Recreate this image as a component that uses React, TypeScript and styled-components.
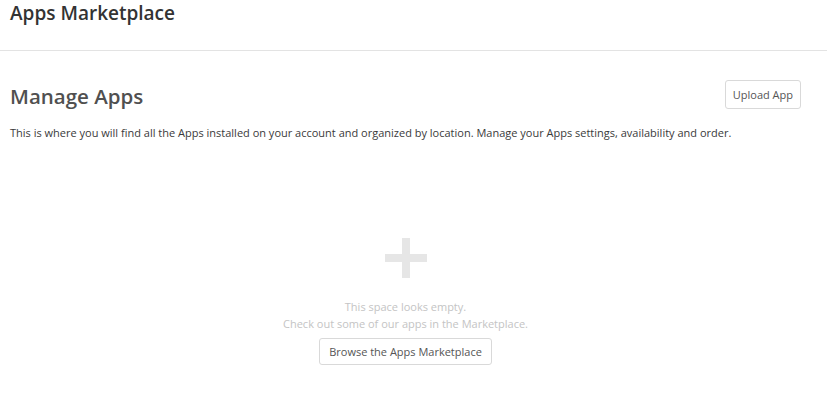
import React from "react";
import styled, { createGlobalStyle } from "styled-components";

const Global = createGlobalStyle`
  html, body { margin: 0; padding: 0; background: #fff; }
  body { font-family: "Open Sans", Lato, Arial, sans-serif; color: #333; }
  * { box-sizing: border-box; }
`;

const Header = styled.header`
  height: 51px;
  padding: 0 10px;
  border-bottom: 1px solid #e3e3e3;
`;

const Title = styled.h1`
  margin: 0;
  padding-top: 1px;
  font-size: 19px;
  line-height: 24px;
  font-weight: 600;
  color: #333;
`;

const Main = styled.main`
  padding: 29px 26px 0 10px;
`;

const TopRow = styled.div`
  display: flex;
  justify-content: space-between;
  align-items: flex-start;
`;

const PageTitle = styled.h2`
  margin: 0;
  padding-top: 1px;
  font-size: 20.5px;
  line-height: 30px;
  font-weight: 600;
  color: #505050;
`;

const Button = styled.button<{ $h: number; $pad: number }>`
  font-family: inherit;
  font-size: 11px;
  color: #555;
  background: #fff;
  border: 1px solid #d9d9d9;
  border-radius: 3px;
  height: ${(p) => p.$h}px;
  padding: 0 ${(p) => p.$pad}px;
  cursor: pointer;
`;

const Intro = styled.p`
  margin: 14px 0 0;
  font-size: 11px;
  line-height: 16px;
  color: #3a3a3a;
`;

const Empty = styled.section`
  display: flex;
  flex-direction: column;
  align-items: center;
  margin-top: 97px;
`;

const EmptyText = styled.p`
  margin: 20px 0 6px;
  font-size: 11px;
  line-height: 17px;
  color: #c4c4c4;
  text-align: center;
`;

const PlusIcon = () => (
  <svg width="42" height="40" viewBox="0 0 42 40" aria-hidden>
    <rect x="17" y="0" width="8" height="40" fill="#e6e6e6" />
    <rect x="0" y="16" width="42" height="8" fill="#e6e6e6" />
  </svg>
);

export default function App() {
  return (
    <>
      <Global />
      <Header>
        <Title>Apps Marketplace</Title>
      </Header>
      <Main>
        <TopRow>
          <PageTitle>Manage Apps</PageTitle>
          <Button $h={29} $pad={7}>Upload App</Button>
        </TopRow>
        <Intro>
          This is where you will find all the Apps installed on your account and organized by location. Manage your Apps settings, availability and order.
        </Intro>
        <Empty>
          <PlusIcon />
          <EmptyText>
            This space looks empty.
            <br />
            Check out some of our apps in the Marketplace.
          </EmptyText>
          <Button $h={27} $pad={9}>Browse the Apps Marketplace</Button>
        </Empty>
      </Main>
    </>
  );
}
